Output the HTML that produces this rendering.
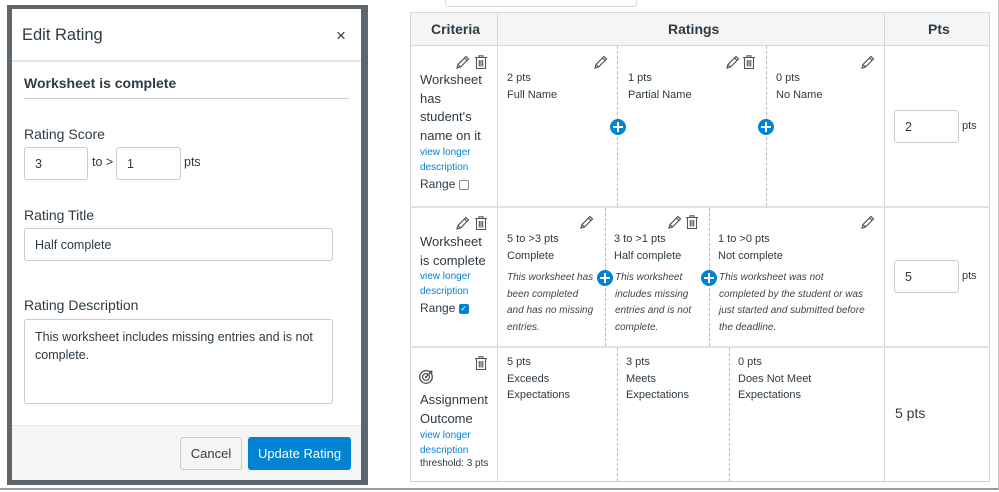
<!DOCTYPE html>
<html><head><meta charset="utf-8"><style>
*{box-sizing:border-box;margin:0;padding:0}
body{width:999px;height:492px;background:#fff;font-family:"Liberation Sans",sans-serif;color:#2d3b45;position:relative;overflow:hidden}
.a{position:absolute}
.s{font-size:11px;line-height:16.5px;white-space:nowrap}
.i{font-style:italic;font-size:10px;line-height:16.5px;color:#3d464d;white-space:nowrap}
.c{font-size:13px;line-height:18.5px}
.lk{color:#0084d1;font-size:10px;line-height:15px}
.vl{position:absolute;border-left:1px dashed #b5b9bd}
.plus{position:absolute;width:16px;height:16px;border-radius:50%;background:#0084d1}
.plus:before{content:"";position:absolute;left:3px;top:7px;width:10px;height:2px;background:#fff}
.plus:after{content:"";position:absolute;left:7px;top:3px;width:2px;height:10px;background:#fff}
.box{position:absolute;border:1px solid #c7cdd1;border-radius:3px;background:#fff;font-size:12.5px;padding-left:10px;display:flex;align-items:center}
</style></head><body>
<svg width="0" height="0" style="position:absolute"><defs>
<symbol id="pen" viewBox="0 0 16 16"><path d="M2 14 L3 10.5 L11 2.5 L13.5 5 L5.5 13 Z M9.5 4 L12 6.5 M3 10.5 L5.5 13" fill="none" stroke="#555" stroke-width="1.2"/></symbol>
<symbol id="tr" viewBox="0 0 16 16"><path d="M2 3.5 H14 M6 3.5 V1.8 H10 V3.5 M3.5 3.5 V14.5 H12.5 V3.5 M6.3 6 V12.5 M8 6 V12.5 M9.7 6 V12.5" fill="none" stroke="#555" stroke-width="1.1"/></symbol>
</defs></svg>
<div class="a" style="left:0;top:0;width:999px;height:490px;border-right:1px solid #c9c9c9;border-bottom:2px solid #9a9a9a"></div>
<div class="a" style="left:7px;top:5px;width:361px;height:480px;background:#5e666d"></div>
<div class="a" style="left:12px;top:9px;width:349px;height:471px;background:#fff"></div>
<div class="a" style="left:22px;top:26px;font-size:16.5px;color:#2d3b45">Edit Rating</div>
<div class="a" style="left:336px;top:26px;font-size:17px;color:#2d3b45">×</div>
<div class="a" style="left:12px;top:60px;width:349px;height:2px;background:#e3e6e8"></div>
<div class="a" style="left:24px;top:75px;font-size:14px;font-weight:bold;color:#2d3b45">Worksheet is complete</div>
<div class="a" style="left:24px;top:98px;width:325px;height:1px;background:#c7cdd1"></div>
<div class="a" style="left:24px;top:126px;font-size:14px">Rating Score</div>
<div class="box" style="left:24px;top:147px;width:64px;height:33px">3</div>
<div class="a" style="left:92px;top:155px;font-size:12.5px">to &gt;</div>
<div class="box" style="left:116px;top:147px;width:65px;height:33px">1</div>
<div class="a" style="left:184px;top:155px;font-size:12.5px">pts</div>
<div class="a" style="left:24px;top:207px;font-size:14px">Rating Title</div>
<div class="box" style="left:24px;top:228px;width:309px;height:33px">Half complete</div>
<div class="a" style="left:24px;top:297px;font-size:14px">Rating Description</div>
<div class="box" style="left:24px;top:319px;width:309px;height:85px;align-items:flex-start;padding-top:8px;font-size:12.5px;line-height:18px">This worksheet includes missing entries and is not<br>complete.</div>
<div class="a" style="left:12px;top:425px;width:349px;height:55px;background:#f5f5f5;border-top:1px solid #e3e6e8"></div>
<div class="a" style="left:180px;top:437px;width:62px;height:33px;border:1px solid #c7cdd1;border-radius:3px;background:#f5f5f5;font-size:13px;text-align:center;line-height:31px">Cancel</div>
<div class="a" style="left:248px;top:437px;width:103px;height:33px;border-radius:3px;background:#0084d1;color:#fff;font-size:13px;text-align:center;line-height:33px">Update Rating</div>
<div class="a" style="left:445px;top:-3px;width:192px;height:10px;border:1px solid #dadada;border-radius:3px"></div>
<div class="a" style="left:410px;top:12px;width:580px;height:470px;border:1px solid #d5d8da;border-bottom:1px solid #c7cdd1"></div>
<div class="a" style="left:411px;top:13px;width:578px;height:33px;background:#f5f5f5;border-bottom:1px solid #d5d8da"></div>
<div class="a" style="left:497px;top:12px;width:1px;height:469px;background:#d5d8da"></div>
<div class="a" style="left:884px;top:12px;width:1px;height:469px;background:#d5d8da"></div>
<div class="a" style="left:410px;top:206px;width:580px;height:2px;background:#e0e3e5"></div>
<div class="a" style="left:410px;top:346px;width:580px;height:2px;background:#e0e3e5"></div>
<div class="a" style="left:431px;top:21px;font-size:14px;font-weight:bold;color:#2d3b45">Criteria</div>
<div class="a" style="left:668px;top:21px;font-size:14px;font-weight:bold;color:#2d3b45">Ratings</div>
<div class="a" style="left:928px;top:21px;font-size:14px;font-weight:bold;color:#2d3b45">Pts</div>
<svg class="a" style="left:455px;top:54px" width="16" height="16"><use href="#pen"/></svg>
<svg class="a" style="left:473px;top:54px" width="16" height="16"><use href="#tr"/></svg>
<div class="a c" style="left:420px;top:71px">Worksheet<br>has<br>student's<br>name on it</div>
<div class="a lk" style="left:420px;top:145px">view longer<br>description</div>
<div class="a" style="left:420px;top:177px;font-size:12px">Range <span style="display:inline-block;width:10px;height:10px;border:1px solid #888;border-radius:2px;vertical-align:middle"></span></div>
<div class="vl" style="left:617px;top:46px;height:160px"></div>
<div class="vl" style="left:766px;top:46px;height:160px"></div>
<svg class="a" style="left:593px;top:54px" width="16" height="16"><use href="#pen"/></svg>
<svg class="a" style="left:725px;top:54px" width="16" height="16"><use href="#pen"/></svg>
<svg class="a" style="left:741px;top:54px" width="16" height="16"><use href="#tr"/></svg>
<svg class="a" style="left:860px;top:54px" width="16" height="16"><use href="#pen"/></svg>
<div class="a s" style="left:507px;top:70px">2 pts<br>Full Name</div>
<div class="a s" style="left:628px;top:70px">1 pts<br>Partial Name</div>
<div class="a s" style="left:776px;top:70px">0 pts<br>No Name</div>
<div class="plus" style="left:610px;top:119px"></div>
<div class="plus" style="left:758px;top:119px"></div>
<div class="box" style="left:894px;top:110px;width:65px;height:33px">2</div>
<div class="a s" style="left:962px;top:118px">pts</div>
<svg class="a" style="left:455px;top:215px" width="16" height="16"><use href="#pen"/></svg>
<svg class="a" style="left:473px;top:215px" width="16" height="16"><use href="#tr"/></svg>
<div class="a c" style="left:420px;top:233px">Worksheet<br>is complete</div>
<div class="a lk" style="left:420px;top:269px">view longer<br>description</div>
<div class="a" style="left:420px;top:301px;font-size:12px">Range <span style="display:inline-block;width:10px;height:10px;background:#0084d1;border-radius:2px;vertical-align:middle;color:#fff;font-size:8px;line-height:10px;text-align:center">✓</span></div>
<div class="vl" style="left:605px;top:208px;height:138px"></div>
<div class="vl" style="left:709px;top:208px;height:138px"></div>
<svg class="a" style="left:579px;top:214px" width="16" height="16"><use href="#pen"/></svg>
<svg class="a" style="left:667px;top:214px" width="16" height="16"><use href="#pen"/></svg>
<svg class="a" style="left:684px;top:214px" width="16" height="16"><use href="#tr"/></svg>
<svg class="a" style="left:860px;top:214px" width="16" height="16"><use href="#pen"/></svg>
<div class="a s" style="left:507px;top:231px">5 to &gt;3 pts<br>Complete</div>
<div class="a s" style="left:614px;top:231px">3 to &gt;1 pts<br>Half complete</div>
<div class="a s" style="left:718px;top:231px">1 to &gt;0 pts<br>Not complete</div>
<div class="a i" style="left:507px;top:270px">This worksheet has<br>been completed<br>and has no missing<br>entries.</div>
<div class="a i" style="left:615px;top:270px">This worksheet<br>includes missing<br>entries and is not<br>complete.</div>
<div class="a i" style="left:719px;top:270px">This worksheet was not<br>completed by the student or was<br>just started and submitted before<br>the deadline.</div>
<div class="plus" style="left:597px;top:270px"></div>
<div class="plus" style="left:701px;top:270px"></div>
<div class="box" style="left:894px;top:260px;width:65px;height:33px">5</div>
<div class="a s" style="left:962px;top:268px">pts</div>
<svg class="a" style="left:473px;top:355px" width="16" height="16"><use href="#tr"/></svg>
<svg class="a" style="left:418px;top:369px" width="16" height="16" viewBox="0 0 14 14"><circle cx="7" cy="7" r="5.5" fill="none" stroke="#555" stroke-width="1.2"/><circle cx="7" cy="7" r="3" fill="none" stroke="#555" stroke-width="1.1"/><circle cx="7" cy="7" r="1" fill="#555"/><path d="M7 7 L12 2 M10 2 H12 V4" stroke="#555" stroke-width="1.1" fill="none"/></svg>
<div class="a c" style="left:420px;top:391px">Assignment<br>Outcome</div>
<div class="a lk" style="left:420px;top:428px">view longer<br>description</div>
<div class="a" style="left:420px;top:458px;font-size:10px">threshold: 3 pts</div>
<div class="vl" style="left:617px;top:348px;height:133px"></div>
<div class="vl" style="left:729px;top:348px;height:133px"></div>
<div class="a s" style="left:507px;top:354px">5 pts<br>Exceeds<br>Expectations</div>
<div class="a s" style="left:626px;top:354px">3 pts<br>Meets<br>Expectations</div>
<div class="a s" style="left:738px;top:354px">0 pts<br>Does Not Meet<br>Expectations</div>
<div class="a" style="left:895px;top:405px;font-size:14px">5 pts</div>
</body></html>
